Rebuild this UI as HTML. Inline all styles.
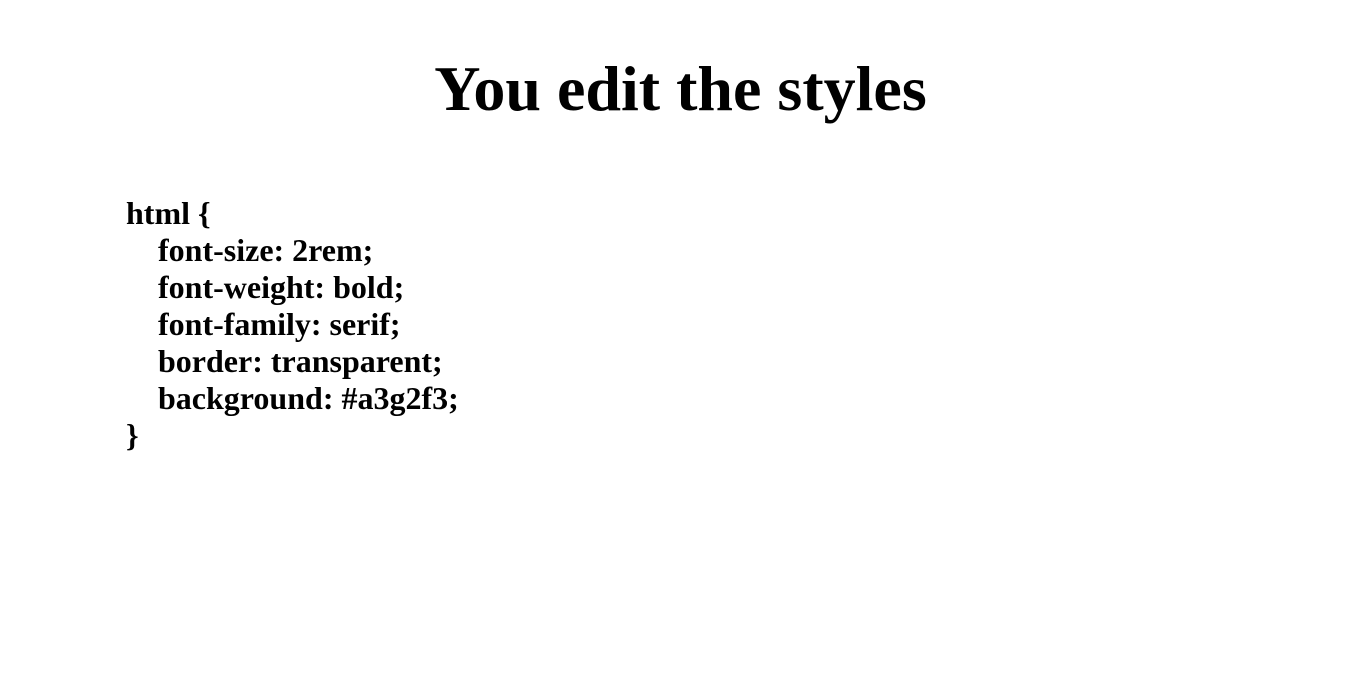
<!DOCTYPE html>
<html><head><style>
body{margin:0;background:#fff;font-family:"Liberation Serif",serif;font-weight:bold;color:#000;}
h1{position:absolute;left:-2px;right:0;top:49px;margin:0;text-align:center;font-size:64px;line-height:80px;}
.code{position:absolute;left:126px;top:195px;font-size:32px;line-height:37px;white-space:pre;}
</style></head><body>
<h1>You edit the styles</h1>
<div class="code">html {
    font-size: 2rem;
    font-weight: bold;
    font-family: serif;
    border: transparent;
    background: #a3g2f3;
}</div>
</body></html>
